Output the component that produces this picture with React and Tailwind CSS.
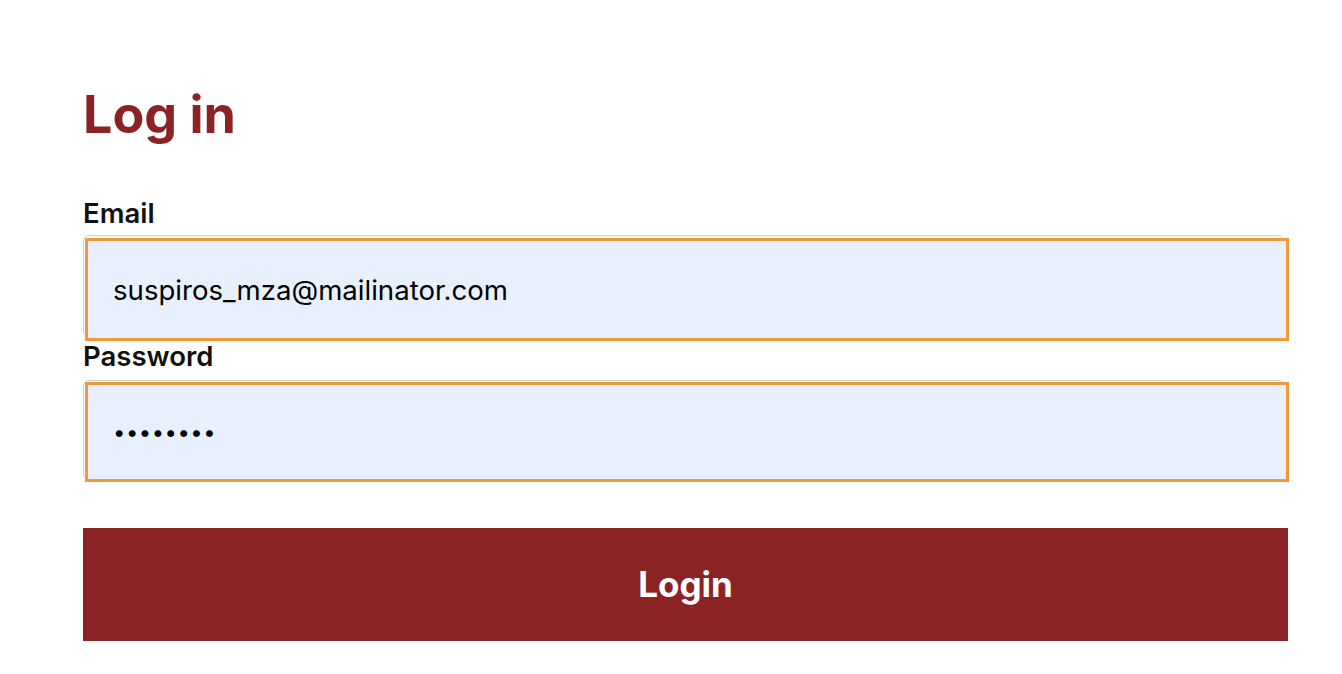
export default function App() {
  return (
    <div className="min-h-screen bg-white font-['Inter','Liberation_Sans',sans-serif] text-[#1a1a1a]">
      <div className="pl-[83px] pt-[90px] w-[1288px]">
        <h1 className="text-[52px] leading-[50px] font-bold text-[#8b2325]">Log in</h1>

        <form className="mt-[57px] flex flex-col" onSubmit={(e) => e.preventDefault()}>
          <label className="pt-[2px] text-[27.5px] leading-[29px] font-semibold text-[#111]">Email</label>
          <div className="relative mt-[7px] h-[106px]">
            <span className="absolute left-0 top-0 w-[1201px] h-[103px] rounded-[6px] border border-[#cfcfcf]"></span>
            <input
              type="email"
              defaultValue="suspiros_mza@mailinator.com"
              className="absolute left-[2px] top-[3px] w-[1204px] h-[103px] bg-[#e8f0fe] border-[3px] border-[#f0983a] pl-[25px] text-[27.6px] text-black outline-none"
            />
          </div>

          <label className="pt-[1px] text-[27.5px] leading-[29px] font-semibold text-[#111]">Password</label>
          <div className="relative mt-[9px] h-[102px]">
            <span className="absolute left-0 top-0 w-[1201px] h-[100px] rounded-[6px] border border-[#cfcfcf]"></span>
            <input
              type="password"
              defaultValue="12345678"
              className="absolute left-[2px] top-[2px] w-[1204px] h-[100px] bg-[#e8f0fe] border-[3px] border-[#f0983a] pl-[25px] text-[22px] text-black tracking-[0.5px] outline-none"
            />
          </div>

          <button
            type="submit"
            className="mt-[46px] w-[1205px] h-[113px] bg-[#8b2325] text-white text-[35px] font-bold"
          >
            Login
          </button>
        </form>
      </div>
    </div>
  );
}
